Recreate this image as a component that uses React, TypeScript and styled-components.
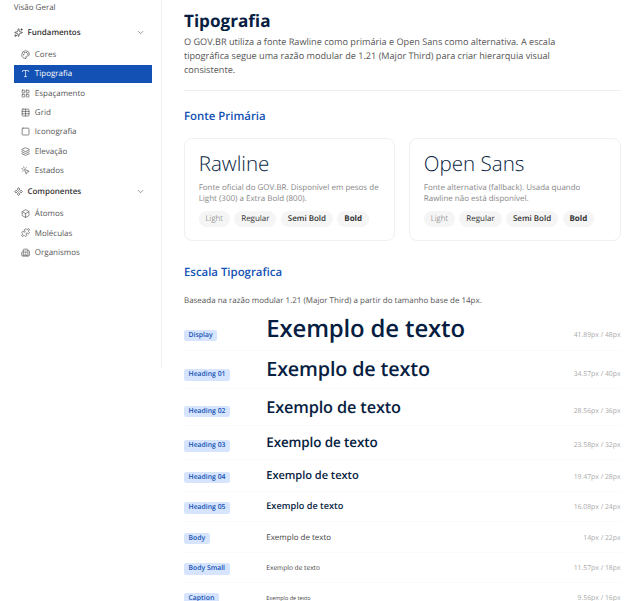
import React from "react";
import styled, { createGlobalStyle } from "styled-components";
import {
  Sparkles, ChevronDown, Palette, Type, LayoutGrid, Table, Square, Layers3, MousePointerClick,
  Component, Box, Puzzle, Building2,
} from "lucide-react";

const Global = createGlobalStyle`
  html, body { margin: 0; padding: 0; background: #fff; overflow: hidden; }
  body {
    font-family: "Open Sans", sans-serif;
    width: 640px;
    height: 601px;
    text-rendering: geometricPrecision;
  }
`;

/* The reference is a 1120px wide page photographed at 640px */
const Page = styled.div`
  zoom: 0.5714;
  display: flex;
  align-items: flex-start;
  width: 1120px;
  height: 1052px;
  overflow: hidden;
`;

const Sidebar = styled.nav`
  flex: none;
  box-sizing: border-box;
  width: 284px;
  height: 644px;
  padding: 1px 17px 0 24px;
  border-right: 1px solid #f0f0f0;
`;

const TopLink = styled.div`
  height: 24px;
  margin-bottom: 16px;
  font-size: 14px;
  line-height: 24px;
  color: #555;
`;

const Group = styled.div`
  display: flex;
  align-items: center;
  height: 32px;
  gap: 8px;
  font-size: 14px;
  font-weight: 600;
  color: #333;
  & > svg:last-child { margin-left: auto; margin-right: 11px; color: #666; }
`;

const Item = styled.div<{ $active?: boolean }>`
  display: flex;
  align-items: center;
  gap: 8px;
  height: 32px;
  margin-bottom: 2px;
  padding-left: 13px;
  font-size: 14px;
  color: ${(p) => (p.$active ? "#fff" : "#555")};
  background: ${(p) => (p.$active ? "#1351b4" : "transparent")};
`;

const Items = styled.div`
  padding: 6px 0 3px;
`;

const Main = styled.main`
  flex: 1;
  min-width: 0;
  padding: 19px 34px 0 38px;
`;

const Title = styled.h1`
  margin: 0 0 2px;
  font-size: 30px;
  line-height: 40px;
  font-weight: 700;
  color: #071d41;
`;

const Lead = styled.p`
  margin: 0;
  max-width: 680px;
  font-size: 16px;
  line-height: 24.5px;
  color: #555;
`;

const Rule = styled.hr`
  margin: 23px 0 31px;
  border: 0;
  border-top: 1px solid #eee;
`;

const Section = styled.h2`
  margin: 0;
  font-size: 20px;
  line-height: 28px;
  font-weight: 600;
  color: #1351b4;
`;

const Cards = styled.div`
  display: grid;
  grid-template-columns: 1fr 1fr;
  gap: 24px;
  margin: 24px 0 42px;
`;

const Card = styled.div`
  box-sizing: border-box;
  height: 179px;
  padding: 24px;
  border: 1px solid #f0f0f0;
  border-radius: 14px;
`;

const CardTitle = styled.div`
  font-size: 36px;
  line-height: 40px;
  font-weight: 300;
  color: #071d41;
`;

const CardText = styled.p`
  margin: 10px 0 12px;
  font-size: 14px;
  line-height: 20px;
  color: #888;
`;

const Chips = styled.div`
  display: flex;
  gap: 8px;
`;

const Chip = styled.span<{ $w: number }>`
  padding: 0 12px;
  height: 28px;
  line-height: 28px;
  border-radius: 14px;
  background: #f5f5f5;
  font-size: 14px;
  font-weight: ${(p) => p.$w};
  color: ${(p) => (p.$w < 400 ? "#666" : "#333")};
`;

const Hint = styled.p`
  margin: 25px 0 2px;
  font-size: 14px;
  line-height: 20px;
  color: #555;
`;

const Row = styled.div`
  display: flex;
  align-items: baseline;
  padding: 13px 0;
  border-bottom: 1px solid #fbfbfb;
`;

const TokenCell = styled.div`
  flex: none;
  width: 144px;
`;

const Token = styled.span`
  display: inline-block;
  padding: 0 8px;
  line-height: 20px;
  border-radius: 4px;
  background: #d6e5fd;
  font-size: 12px;
  font-weight: 600;
  color: #1351b4;
`;

const Sample = styled.div<{ $size: number; $lh: number; $weight: number; $track: number }>`
  flex: 1;
  font-size: ${(p) => p.$size}px;
  line-height: ${(p) => p.$lh}px;
  font-weight: ${(p) => p.$weight};
  letter-spacing: ${(p) => p.$track}px;
  color: ${(p) => (p.$weight > 400 ? "#071d41" : "#444")};
`;

const Meta = styled.div`
  flex: none;
  font-size: 12px;
  color: #aaa;
`;

const scale = [
  { t: "Display", s: 41.89, l: 48, w: 600, k: -0.25, m: "41.89px / 48px" },
  { t: "Heading 01", s: 34.57, l: 40, w: 600, k: -0.25, m: "34.57px / 40px" },
  { t: "Heading 02", s: 28.56, l: 36, w: 600, k: -0.25, m: "28.56px / 36px" },
  { t: "Heading 03", s: 23.58, l: 32, w: 600, k: -0.2, m: "23.58px / 32px" },
  { t: "Heading 04", s: 19.47, l: 28, w: 600, k: -0.1, m: "19.47px / 28px" },
  { t: "Heading 05", s: 16.08, l: 24, w: 600, k: 0, m: "16.08px / 24px" },
  { t: "Body", s: 14, l: 22, w: 400, k: 0, m: "14px / 22px" },
  { t: "Body Small", s: 11.57, l: 18, w: 400, k: 0, m: "11.57px / 18px" },
  { t: "Caption", s: 9.56, l: 16, w: 400, k: 0, m: "9.56px / 16px" },
];

const chips: [string, number][] = [["Light", 300], ["Regular", 400], ["Semi Bold", 600], ["Bold", 700]];

const Ic = { size: 16, strokeWidth: 1.8 };

export default function App() {
  return (
    <Page>
      <Global />
      <Sidebar>
        <TopLink>Visão Geral</TopLink>
        <Group><Sparkles {...Ic} />Fundamentos<ChevronDown {...Ic} /></Group>
        <Items>
          <Item><Palette {...Ic} />Cores</Item>
          <Item $active><Type {...Ic} />Tipografia</Item>
          <Item><LayoutGrid {...Ic} />Espaçamento</Item>
          <Item><Table {...Ic} />Grid</Item>
          <Item><Square {...Ic} />Iconografia</Item>
          <Item><Layers3 {...Ic} />Elevação</Item>
          <Item><MousePointerClick {...Ic} />Estados</Item>
        </Items>
        <Group><Component {...Ic} />Componentes<ChevronDown {...Ic} /></Group>
        <Items>
          <Item><Box {...Ic} />Átomos</Item>
          <Item><Puzzle {...Ic} />Moléculas</Item>
          <Item><Building2 {...Ic} />Organismos</Item>
        </Items>
      </Sidebar>
      <Main>
        <Title>Tipografia</Title>
        <Lead>O GOV.BR utiliza a fonte Rawline como primária e Open Sans como alternativa. A escala tipográfica segue uma razão modular de 1.21 (Major Third) para criar hierarquia visual consistente.</Lead>
        <Rule />
        <Section>Fonte Primária</Section>
        <Cards>
          <Card>
            <CardTitle>Rawline</CardTitle>
            <CardText>Fonte oficial do GOV.BR. Disponível em pesos de Light (300) a Extra Bold (800).</CardText>
            <Chips>{chips.map(([l, w]) => <Chip key={l} $w={w}>{l}</Chip>)}</Chips>
          </Card>
          <Card>
            <CardTitle>Open Sans</CardTitle>
            <CardText>Fonte alternativa (fallback). Usada quando Rawline não está disponível.</CardText>
            <Chips>{chips.map(([l, w]) => <Chip key={l} $w={w}>{l}</Chip>)}</Chips>
          </Card>
        </Cards>
        <Section>Escala Tipografica</Section>
        <Hint>Baseada na razão modular 1.21 (Major Third) a partir do tamanho base de 14px.</Hint>
        {scale.map((r) => (
          <Row key={r.t}>
            <TokenCell><Token>{r.t}</Token></TokenCell>
            <Sample $size={r.s} $lh={r.l} $weight={r.w} $track={r.k}>Exemplo de texto</Sample>
            <Meta>{r.m}</Meta>
          </Row>
        ))}
      </Main>
    </Page>
  );
}
